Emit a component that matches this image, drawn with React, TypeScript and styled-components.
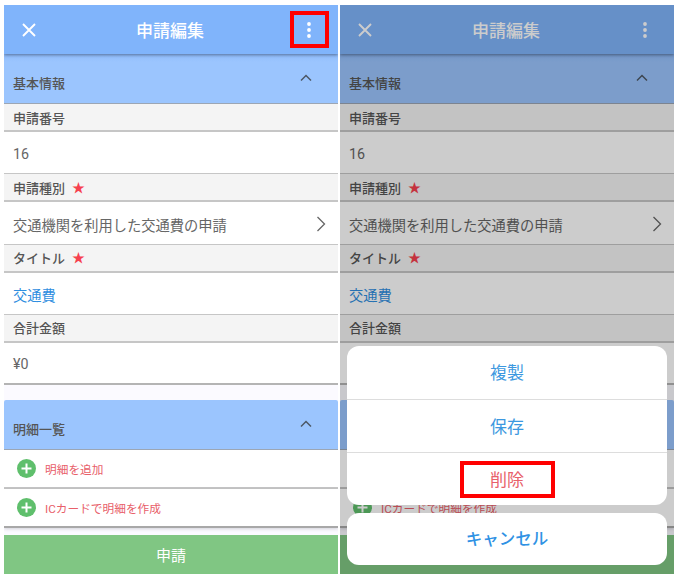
import styled, { createGlobalStyle } from "styled-components";

const GlobalStyle = createGlobalStyle`
  html, body { margin: 0; padding: 0; background: #fff; }
  body { font-family: Roboto, "Noto Sans CJK JP", sans-serif; }
  * { box-sizing: border-box; }
`;

const Page = styled.div`
  width: 678px;
  height: 578px;
  display: flex;
  gap: 2px;
  padding: 5px 4px 4px;
  font-family: Roboto, "Noto Sans CJK JP", sans-serif;
`;

const Phone = styled.div`
  position: relative;
  width: 334px;
  height: 569px;
  display: flex;
  flex-direction: column;
  background: #fbfaff;
  overflow: hidden;
`;

const Header = styled.header`
  position: relative;
  z-index: 1;
  height: 49px;
  flex: none;
  display: grid;
  grid-template-columns: 1fr auto 1fr;
  align-items: center;
  padding: 0 21px 0 17px;
  background: #80b4fb;
  box-shadow: 0 1px 3px rgba(40, 50, 70, 0.55);
`;

const Title = styled.h1`
  margin: 0 0 0 2px;
  font-size: 17px;
  font-weight: 500;
  color: #fff;
`;

const IconButton = styled.span<{ $end?: boolean }>`
  display: flex;
  width: 16px;
  justify-content: center;
  justify-self: ${(props) => (props.$end ? "end" : "start")};
`;

const Section = styled.div`
  height: 50px;
  flex: none;
  display: flex;
  align-items: flex-start;
  justify-content: space-between;
  padding: 20px 26px 0 9px;
  background: linear-gradient(#90bcfb 0, #9bc5fe 8px);
  border-bottom: 1px solid #9ca6b4;
  font-size: 13px;
  line-height: 19px;
  font-weight: 500;
  color: #555;
`;

const SecondSection = styled(Section)`
  margin-top: 15px;
  background: #9bc5fe;
  border-radius: 2px 2px 0 0;
`;

const Label = styled.div`
  height: 28px;
  flex: none;
  display: flex;
  align-items: center;
  gap: 7px;
  padding: 0 9px;
  background: #f4f4f4;
  border-bottom: 2px solid #c6c6c6;
  font-size: 13px;
  font-weight: 500;
  color: #555;
`;

const Star = styled.span`
  color: #f6404e;
  font-size: 13px;
  line-height: 13px;
`;

const Value = styled.div<{ $tone?: "link" }>`
  height: 42.3px;
  flex: none;
  display: flex;
  align-items: center;
  justify-content: space-between;
  padding: 3px 12px 0 9px;
  background: #fff;
  border-bottom: 1px solid #c6c6c6;
  font-size: 14.25px;
  color: ${(props) => (props.$tone === "link" ? "#2f8ee0" : "#666")};
`;

const LastValue = styled(Value)`
  height: 42.1px;
  border-bottom: 2px solid #b4b4b4;
`;

const AddRow = styled.div`
  height: 39px;
  flex: none;
  display: flex;
  align-items: center;
  gap: 9px;
  padding: 0 0 0 13px;
  background: #fff;
  border-bottom: 2px solid #c6c6c6;
  font-size: 11.7px;
  color: #e8606a;
`;

const LastAddRow = styled(AddRow)`
  border-bottom-color: #a8a8a8;
  box-shadow: 0 1px 3px rgba(120, 120, 130, 0.3);
`;

const Submit = styled.div`
  margin-top: auto;
  height: 39px;
  flex: none;
  display: flex;
  align-items: center;
  justify-content: center;
  background: #80c683;
  font-size: 15px;
  color: #fff;
`;

const Dim = styled.div`
  position: absolute;
  inset: 0;
  z-index: 2;
  background: rgba(0, 0, 0, 0.2);
`;

const Sheet = styled.div`
  position: absolute;
  z-index: 3;
  left: 7px;
  right: 7px;
  bottom: 9px;
  display: flex;
  flex-direction: column;
  gap: 8px;
`;

const SheetGroup = styled.div`
  display: flex;
  flex-direction: column;
  background: #fff;
  border-radius: 12px;
  overflow: hidden;
`;

const SheetItem = styled.div<{ $danger?: boolean }>`
  height: 53px;
  display: flex;
  align-items: center;
  justify-content: center;
  padding-bottom: 2px;
  font-size: 17px;
  color: ${(props) => (props.$danger ? "#e8606a" : "#3c98e0")};
  & + & {
    border-top: 1px solid #ddd;
  }
`;

const CancelItem = styled.div`
  height: 52px;
  display: flex;
  align-items: center;
  justify-content: center;
  padding-bottom: 2px;
  font-size: 16.5px;
  font-weight: 500;
  color: #2f92e4;
`;

const Highlight = styled.div<{ $x: number; $y: number; $w: number; $h: number }>`
  position: absolute;
  z-index: 4;
  left: ${(props) => props.$x}px;
  top: ${(props) => props.$y}px;
  width: ${(props) => props.$w}px;
  height: ${(props) => props.$h}px;
  border: 4px solid #f00;
`;

const CloseIcon = ({ color }: { color: string }) => (
  <svg width="16" height="16" viewBox="0 0 16 16">
    <path d="M2 2 L14 14 M14 2 L2 14" stroke={color} strokeWidth="1.9" fill="none" />
  </svg>
);

const DotsIcon = ({ color }: { color: string }) => (
  <svg width="4" height="16" viewBox="0 0 4 16">
    <circle cx="2" cy="2" r="1.9" fill={color} />
    <circle cx="2" cy="8" r="1.9" fill={color} />
    <circle cx="2" cy="14" r="1.9" fill={color} />
  </svg>
);

const ChevronUp = () => (
  <svg width="12" height="8" viewBox="0 0 12 8">
    <path d="M1 6.5 L6 1.5 L11 6.5" stroke="#4d5866" strokeWidth="1.5" fill="none" />
  </svg>
);

const ChevronRight = () => (
  <svg width="10" height="16" viewBox="0 0 10 16">
    <path d="M1.5 1 L8.5 8 L1.5 15" stroke="#666" strokeWidth="1.3" fill="none" />
  </svg>
);

const PlusIcon = () => (
  <svg width="19" height="19" viewBox="0 0 19 19">
    <circle cx="9.5" cy="9.5" r="9.5" fill="#5fbf6c" />
    <path d="M9.5 4.5 V14.5 M4.5 9.5 H14.5" stroke="#fff" strokeWidth="2" />
  </svg>
);

function Screen() {
  return (
    <>
      <Header>
        <IconButton>
          <CloseIcon color="#fff" />
        </IconButton>
        <Title>申請編集</Title>
        <IconButton $end>
          <DotsIcon color="#fff" />
        </IconButton>
      </Header>
      <Section>
        基本情報
        <ChevronUp />
      </Section>
      <Label>申請番号</Label>
      <Value>16</Value>
      <Label>
        申請種別<Star>★</Star>
      </Label>
      <Value>
        交通機関を利用した交通費の申請
        <ChevronRight />
      </Value>
      <Label>
        タイトル<Star>★</Star>
      </Label>
      <Value $tone="link">交通費</Value>
      <Label>合計金額</Label>
      <LastValue>¥0</LastValue>
      <SecondSection>
        明細一覧
        <ChevronUp />
      </SecondSection>
      <AddRow>
        <PlusIcon />
        明細を追加
      </AddRow>
      <LastAddRow>
        <PlusIcon />
        ICカードで明細を作成
      </LastAddRow>
      <Submit>申請</Submit>
    </>
  );
}

export default function App() {
  return (
    <>
      <GlobalStyle />
      <Page>
        <Phone>
          <Screen />
        </Phone>
        <Phone>
          <Screen />
          <Dim />
          <Sheet>
            <SheetGroup>
              <SheetItem>複製</SheetItem>
              <SheetItem>保存</SheetItem>
              <SheetItem $danger>削除</SheetItem>
            </SheetGroup>
            <SheetGroup>
              <CancelItem>キャンセル</CancelItem>
            </SheetGroup>
          </Sheet>
        </Phone>
        <Highlight $x={290} $y={11} $w={39} $h={37} />
        <Highlight $x={460} $y={461} $w={95} $h={37} />
      </Page>
    </>
  );
}
